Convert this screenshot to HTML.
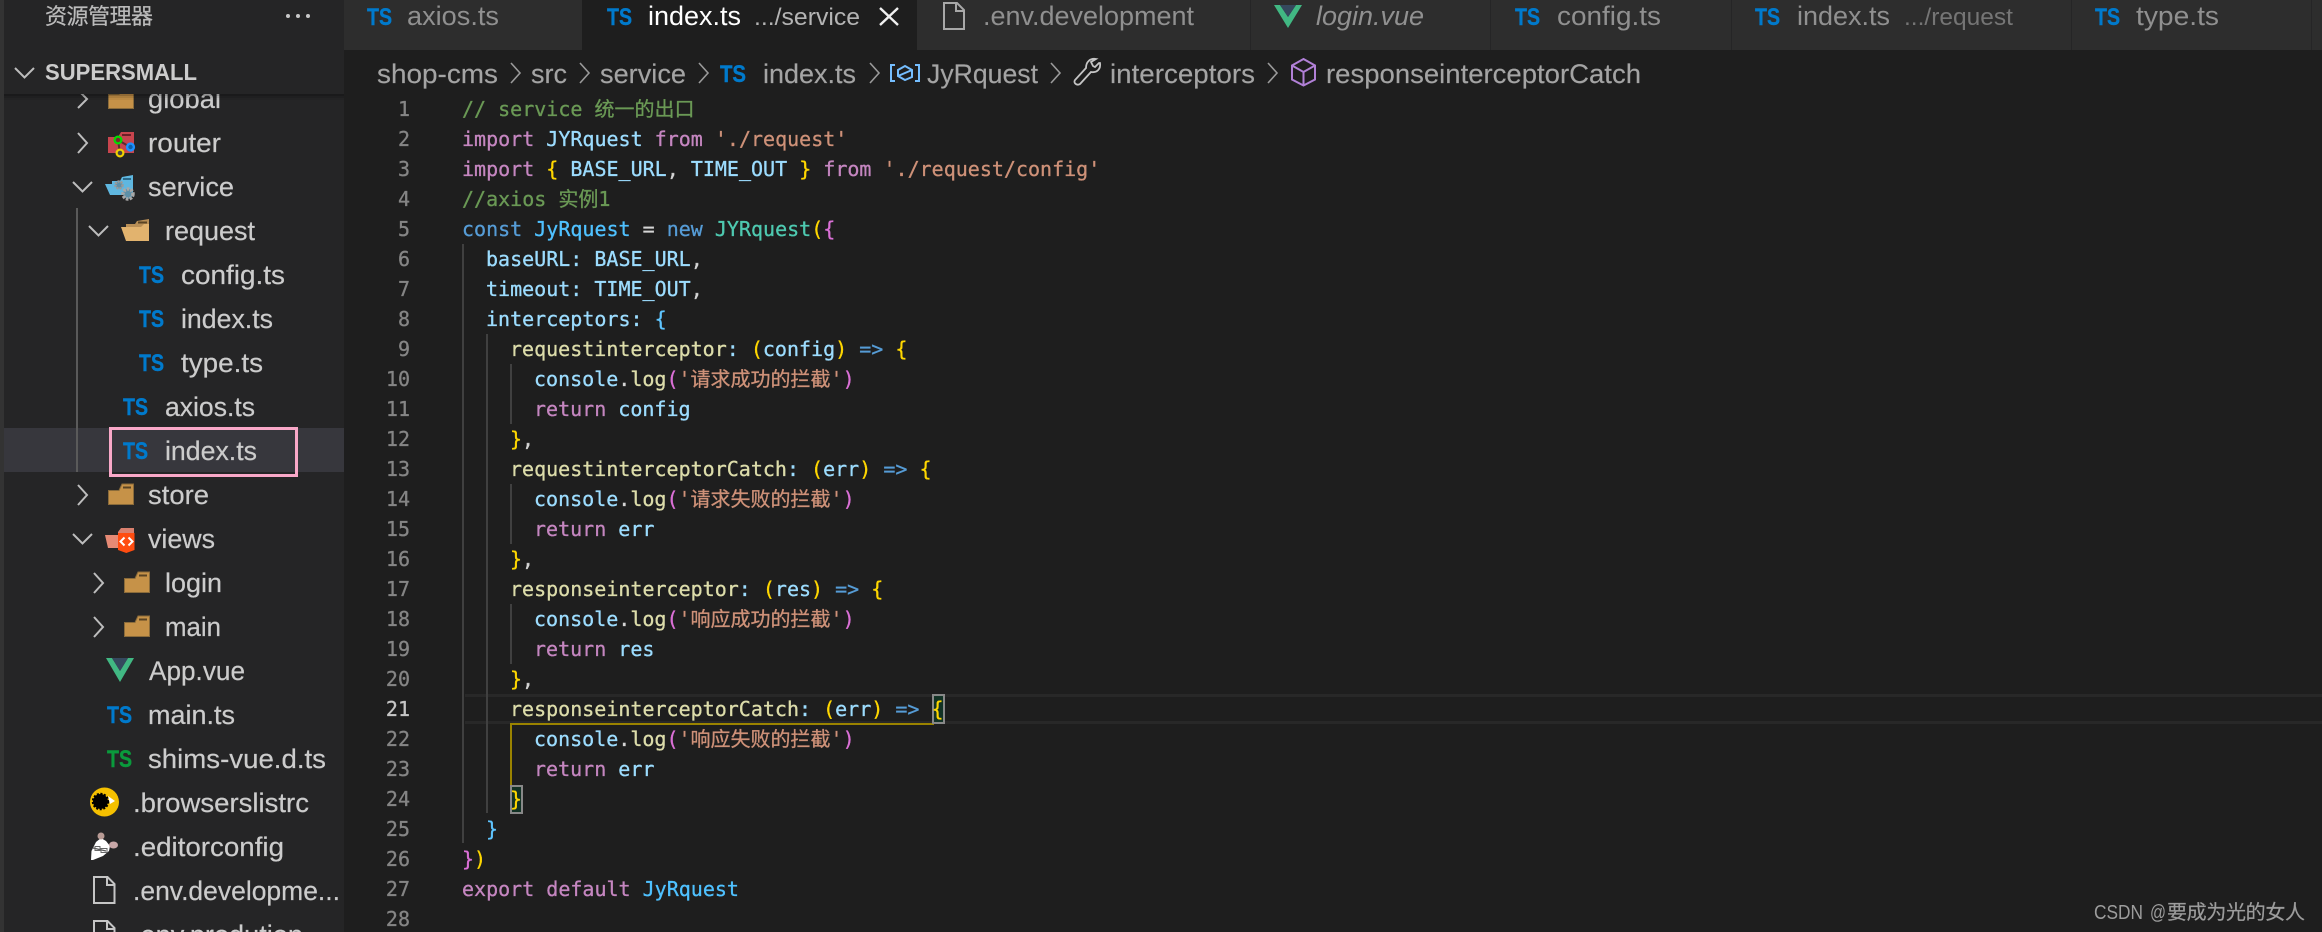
<!DOCTYPE html>
<html><head><meta charset="utf-8"><title>VS Code</title>
<style>
html,body{margin:0;padding:0;background:#1e1e1e;width:2322px;height:932px;overflow:hidden}
svg{display:block}
text{white-space:pre}
.s{font-family:"Liberation Sans","Noto Sans CJK SC",sans-serif;font-size:27px;fill:#cccccc;stroke:#cccccc;stroke-width:.2px}
.tab{font-family:"Liberation Sans",sans-serif;font-size:27px;fill:#909090}
.sm{font-family:"Liberation Sans",sans-serif;font-size:24px;fill:#757575}
.bc{font-family:"Liberation Sans",sans-serif;font-size:27px;fill:#a4a4a4;stroke:#a4a4a4;stroke-width:.15px}
.ts{font-family:"Liberation Sans",sans-serif;font-size:24px;font-weight:bold;fill:#007acc;stroke:#007acc;stroke-width:.4px}
.c{font-family:"DejaVu Sans Mono","Noto Sans CJK SC",monospace;font-size:20px;fill:#d4d4d4;stroke:#d4d4d4;stroke-width:.3px}
.n{font-family:"DejaVu Sans Mono",monospace;font-size:20px;fill:#858585;stroke:#858585;stroke-width:.3px;text-anchor:end}
.kw{fill:#c586c0;stroke:#c586c0}.v{fill:#9cdcfe;stroke:#9cdcfe}.k{fill:#569cd6;stroke:#569cd6}.co{fill:#4fc1ff;stroke:#4fc1ff}.cl{fill:#4ec9b0;stroke:#4ec9b0}.st{fill:#ce9178;stroke:#ce9178}.f{fill:#dcdcaa;stroke:#dcdcaa}.g{fill:#ffd700;stroke:#ffd700}.p{fill:#da70d6;stroke:#da70d6}.cm{fill:#6a9955;stroke:#6a9955}.lb{fill:#5fc5ff;stroke:#5fc5ff}
.ch{fill:none;stroke:#bdbdbd;stroke-width:2}
.chb{fill:none;stroke:#9a9a9a;stroke-width:1.6}
</style></head><body>
<svg xmlns="http://www.w3.org/2000/svg" width="2322" height="932" viewBox="0 0 2322 932">
<defs>
<g id="fold"><path d="M.5 7.5H11L14 1H25.5V21.5H.5Z" fill="#c69248" stroke="#8a6b3a"/><rect x="15" y="3.5" width="8" height="2" fill="#5a4424"/></g>
</defs>
<rect width="2322" height="932" fill="#1e1e1e"/>
<!-- activity strip + sidebar -->
<rect x="4" y="0" width="340" height="932" fill="#252526"/>
<rect x="0" y="0" width="4" height="932" fill="#333333"/>
<rect x="4" y="428" width="340" height="44" fill="#37373d"/>
<rect x="76" y="208" width="2" height="264" fill="#5a5a5a"/>

<!-- tree -->
<path class="ch" d="M78 90l9 9-9 9"/><use href="#fold" x="108" y="87"/>
<text class="s" x="148" y="108" textLength="73" lengthAdjust="spacingAndGlyphs">global</text>

<path class="ch" d="M78 133l9 10-9 10"/>
<path d="M108 137H118L121 132H134V153H108Z" fill="#c8454e"/><rect x="122" y="134" width="9" height="2" fill="#6b2026"/>
<path d="M118 140L130 147M118 140L120 153" stroke="#5c2b30" stroke-width="2" fill="none"/>
<circle cx="118" cy="140" r="3.400" fill="#7a2a30" stroke="#00e000" stroke-width="2.200"/>
<circle cx="130.500" cy="147" r="3.400" fill="#0d5fa8" stroke="#1e90ff" stroke-width="2.400"/>
<circle cx="120" cy="153" r="3.400" fill="#444" stroke="#f0d000" stroke-width="2.200"/>
<text class="s" x="148" y="152" textLength="73" lengthAdjust="spacingAndGlyphs">router</text>

<path class="ch" d="M73 182l9.500 9.500 9.500-9.500"/>
<path d="M112 181H120L122 177L133 175V195H110L105 184H112Z" fill="#5fb7e0"/><rect x="123" y="178" width="8" height="2" fill="#2a6a8a"/>
<circle cx="119" cy="185" r="3.500" fill="#5d90a8" stroke="#9a9a9a" stroke-width="2.500" stroke-dasharray="2 1"/>
<circle cx="128" cy="194" r="5" fill="#5d90a8" stroke="#a8a8a8" stroke-width="3.500" stroke-dasharray="2.500 1.200"/>
<text class="s" x="148" y="196" textLength="86" lengthAdjust="spacingAndGlyphs">service</text>

<path class="ch" d="M89 226l9.500 9.500 9.500-9.500"/>
<path d="M126 227V224H135L137 221L149 219V241H126Z" fill="#b98f56"/><path d="M121 227H141L144 224H149V241H126Z" fill="#e2b36e"/><rect x="138" y="221.500" width="9" height="2" fill="#5a4424"/>
<text class="s" x="165" y="240" textLength="90" lengthAdjust="spacingAndGlyphs">request</text>

<text class="ts" x="139" y="283" textLength="25" lengthAdjust="spacingAndGlyphs">TS</text>
<text class="s" x="181" y="284" textLength="104" lengthAdjust="spacingAndGlyphs">config.ts</text>
<text class="ts" x="139" y="327" textLength="25" lengthAdjust="spacingAndGlyphs">TS</text>
<text class="s" x="181" y="328" textLength="92" lengthAdjust="spacingAndGlyphs">index.ts</text>
<text class="ts" x="139" y="371" textLength="25" lengthAdjust="spacingAndGlyphs">TS</text>
<text class="s" x="181" y="372" textLength="82" lengthAdjust="spacingAndGlyphs">type.ts</text>
<text class="ts" x="123" y="415" textLength="25" lengthAdjust="spacingAndGlyphs">TS</text>
<text class="s" x="165" y="416" textLength="90" lengthAdjust="spacingAndGlyphs">axios.ts</text>
<text class="ts" x="123" y="459" textLength="25" lengthAdjust="spacingAndGlyphs">TS</text>
<text class="s" x="165" y="460" textLength="92" lengthAdjust="spacingAndGlyphs">index.ts</text>
<rect x="110.500" y="428.500" width="186" height="47" fill="none" stroke="#f9a8c8" stroke-width="3"/>

<path class="ch" d="M78 485l9 10-9 10"/><use href="#fold" x="108" y="483"/>
<text class="s" x="148" y="504" textLength="61" lengthAdjust="spacingAndGlyphs">store</text>

<path class="ch" d="M73 534l9.500 9.500 9.500-9.500"/>
<path d="M105 535H118V548H108Z" fill="#e68a75"/><path d="M118 532L121 528H134V534H118Z" fill="#d9806e"/>
<path d="M118 533H134.500V550L126.300 553L118 550Z" fill="#ff4c10"/>
<path d="M124.500 537.500L120.500 541.500L124.500 545.500M128.500 537.500L132.500 541.500L128.500 545.500" stroke="#fff" stroke-width="2" fill="none"/>
<text class="s" x="148" y="548" textLength="67" lengthAdjust="spacingAndGlyphs">views</text>

<path class="ch" d="M94 573l9 10-9 10"/><use href="#fold" x="124" y="571"/>
<text class="s" x="165" y="592" textLength="57" lengthAdjust="spacingAndGlyphs">login</text>
<path class="ch" d="M94 617l9 10-9 10"/><use href="#fold" x="124" y="615"/>
<text class="s" x="165" y="636" textLength="56" lengthAdjust="spacingAndGlyphs">main</text>

<path d="M106 658H112L120 671L128 658H134L120 682Z" fill="#41b883"/><path d="M112 658H128L120 671Z" fill="#35495e"/>
<text class="s" x="149" y="680" textLength="96" lengthAdjust="spacingAndGlyphs">App.vue</text>
<text class="ts" x="107" y="723" textLength="25" lengthAdjust="spacingAndGlyphs">TS</text>
<text class="s" x="148" y="724" textLength="87" lengthAdjust="spacingAndGlyphs">main.ts</text>
<text class="ts" x="107" y="767" textLength="25" lengthAdjust="spacingAndGlyphs" style="fill:#0a9a3c;stroke:#0a9a3c">TS</text>
<text class="s" x="148" y="768" textLength="178" lengthAdjust="spacingAndGlyphs">shims-vue.d.ts</text>

<circle cx="104.500" cy="802" r="14.500" fill="#f5c000"/>
<circle cx="100.500" cy="801.500" r="7.500" fill="#000" stroke="#000" stroke-width="2.500" stroke-dasharray="2 1.500"/>
<path d="M108 796L115 801L110 804Z" fill="#fff"/>
<text class="s" x="133" y="812" textLength="176" lengthAdjust="spacingAndGlyphs">.browserslistrc</text>

<path d="M91 860L91.500 851L96 842L101 838L106 841L110 846L109 851L103 856L93 860Z" fill="#fff"/>
<ellipse cx="101" cy="836" rx="3.500" ry="3.500" fill="#b89a94"/><ellipse cx="113.500" cy="845" rx="4.500" ry="3.500" fill="#c9a8a8"/>
<path d="M93 848L106 851" stroke="#555" stroke-width="1.200" fill="none"/><rect x="95" y="846.500" width="5" height="4" fill="none" stroke="#666"/><rect x="101" y="848.500" width="6" height="4" fill="none" stroke="#666"/>
<text class="s" x="133" y="856" textLength="151" lengthAdjust="spacingAndGlyphs">.editorconfig</text>

<path d="M94 877H107.500L114.500 884V903H94Z M107 877V885H114.500" fill="none" stroke="#c5c5c5" stroke-width="2"/>
<text class="s" x="133" y="900" textLength="207" lengthAdjust="spacingAndGlyphs">.env.developme...</text>
<path d="M94 921H107.500L114.500 928V947H94Z M107 921V929H114.500" fill="none" stroke="#c5c5c5" stroke-width="2"/>
<text class="s" x="133" y="944" textLength="170" lengthAdjust="spacingAndGlyphs">.env.prodution</text>

<!-- sidebar header -->
<rect x="4" y="0" width="340" height="94" fill="#252526"/>
<rect x="4" y="94" width="340" height="2" fill="#000" fill-opacity=".28"/><rect x="4" y="96" width="340" height="2" fill="#000" fill-opacity=".14"/><rect x="4" y="98" width="340" height="2" fill="#000" fill-opacity=".05"/>
<text x="45" y="24" style="font-family:'Liberation Sans','Noto Sans CJK SC',sans-serif;font-size:22px;fill:#bbbbbb;stroke:#bbbbbb;stroke-width:.2px" textLength="108">资源管理器</text>
<circle cx="288" cy="16" r="2" fill="#c8c8c8"/><circle cx="298" cy="16" r="2" fill="#c8c8c8"/><circle cx="308" cy="16" r="2" fill="#c8c8c8"/>
<path class="ch" d="M15 68l9.500 9.500 9.500-9.500"/>
<text x="45" y="80" style="font-family:'Liberation Sans',sans-serif;font-size:23px;font-weight:bold;fill:#cccccc" textLength="152" lengthAdjust="spacingAndGlyphs">SUPERSMALL</text>

<!-- tabs -->
<rect x="344" y="0" width="1978" height="50" fill="#2d2d2d"/>
<rect x="582" y="0" width="335" height="50" fill="#1e1e1e"/>
<g fill="#252526"><rect x="1250" y="0" width="1" height="50"/><rect x="1490" y="0" width="1" height="50"/><rect x="1731" y="0" width="1" height="50"/><rect x="2071" y="0" width="1" height="50"/><rect x="2311" y="0" width="1" height="50"/></g>
<text class="ts" x="367" y="25" textLength="25" lengthAdjust="spacingAndGlyphs">TS</text>
<text class="tab" x="407" y="25" textLength="92" lengthAdjust="spacingAndGlyphs">axios.ts</text>
<text class="ts" x="607" y="25" textLength="25" lengthAdjust="spacingAndGlyphs">TS</text>
<text class="tab" x="648" y="25" textLength="93" lengthAdjust="spacingAndGlyphs" style="fill:#ffffff">index.ts</text>
<text class="sm" x="754" y="25" textLength="106" lengthAdjust="spacingAndGlyphs" style="fill:#b4b4b4">.../service</text>
<path d="M880 8L898 25M898 8L880 25" stroke="#f0f0f0" stroke-width="2.400" fill="none"/>
<path d="M944 3H957L964 10V29H944Z M956 3V11H964" fill="none" stroke="#a8a8a8" stroke-width="2"/>
<text class="tab" x="983" y="25" textLength="211" lengthAdjust="spacingAndGlyphs">.env.development</text>
<path d="M1274 5H1280L1288 17L1296 5H1302L1288 28Z" fill="#41b883"/><path d="M1280 5H1296L1288 17Z" fill="#35495e"/>
<text class="tab" x="1316" y="25" textLength="108" lengthAdjust="spacingAndGlyphs" style="font-style:italic">login.vue</text>
<text class="ts" x="1515" y="25" textLength="25" lengthAdjust="spacingAndGlyphs">TS</text>
<text class="tab" x="1557" y="25" textLength="104" lengthAdjust="spacingAndGlyphs">config.ts</text>
<text class="ts" x="1755" y="25" textLength="25" lengthAdjust="spacingAndGlyphs">TS</text>
<text class="tab" x="1797" y="25" textLength="93" lengthAdjust="spacingAndGlyphs">index.ts</text>
<text class="sm" x="1904" y="25" textLength="109" lengthAdjust="spacingAndGlyphs">.../request</text>
<text class="ts" x="2095" y="25" textLength="25" lengthAdjust="spacingAndGlyphs">TS</text>
<text class="tab" x="2136" y="25" textLength="83" lengthAdjust="spacingAndGlyphs">type.ts</text>

<!-- breadcrumbs -->
<text class="bc" x="377" y="83" textLength="121" lengthAdjust="spacingAndGlyphs">shop-cms</text>
<path class="chb" d="M511 63l9 10-9 10"/>
<text class="bc" x="531" y="83" textLength="36" lengthAdjust="spacingAndGlyphs">src</text>
<path class="chb" d="M580 63l9 10-9 10"/>
<text class="bc" x="600" y="83" textLength="86" lengthAdjust="spacingAndGlyphs">service</text>
<path class="chb" d="M699 63l9 10-9 10"/>
<text class="ts" x="720" y="82" textLength="26" lengthAdjust="spacingAndGlyphs">TS</text>
<text class="bc" x="763" y="83" textLength="93" lengthAdjust="spacingAndGlyphs">index.ts</text>
<path class="chb" d="M870 63l9 10-9 10"/>
<g fill="none" stroke="#75beff" stroke-width="2"><path d="M895 65H891V81H895M915 65H919V81H915"/><path d="M905 66L912 70V77L905 80L898 76V70Z M898 76L912 70"/></g>
<text class="bc" x="927" y="83" textLength="111" lengthAdjust="spacingAndGlyphs">JyRquest</text>
<path class="chb" d="M1051 63l9 10-9 10"/>
<path d="M1099 63L1095 67L1093 66L1091 62L1096 59C1090 58 1086 62 1086 68L1075 80C1073 83 1077 86 1080 84L1091 72C1097 73 1101 69 1100 63Z" fill="none" stroke="#c5c5c5" stroke-width="1.800"/>
<text class="bc" x="1110" y="83" textLength="145" lengthAdjust="spacingAndGlyphs">interceptors</text>
<path class="chb" d="M1268 63l9 10-9 10"/>
<path d="M1303.500 59L1315 65.500V79.500L1303.500 85.500L1292 79.500V65.500Z M1292 65.500L1303.500 72L1315 65.500 M1303.500 72V85.500" fill="none" stroke="#b180d7" stroke-width="2"/>
<text class="bc" x="1326" y="83" textLength="315" lengthAdjust="spacingAndGlyphs">responseinterceptorCatch</text>

<!-- guides and highlights -->
<rect x="465" y="694" width="1857" height="3" fill="#282828"/><rect x="465" y="721" width="1857" height="3" fill="#282828"/>
<g fill="#404040"><rect x="462" y="244" width="2" height="599"/><rect x="486" y="334" width="2" height="479"/><rect x="510" y="364" width="2" height="60"/><rect x="510" y="484" width="2" height="60"/><rect x="510" y="604" width="2" height="60"/></g>
<path d="M934 724H511V785" fill="none" stroke="#9a8300" stroke-width="2"/>
<rect x="933" y="695" width="11" height="28" fill="#0d3a28" fill-opacity=".7" stroke="#888" stroke-width="2"/>
<rect x="511" y="786" width="11" height="27" fill="#0d3a28" fill-opacity=".7" stroke="#888" stroke-width="2"/>

<!-- line numbers -->
<text class="n" x="410" y="116">1</text><text class="n" x="410" y="146">2</text><text class="n" x="410" y="176">3</text><text class="n" x="410" y="206">4</text><text class="n" x="410" y="236">5</text><text class="n" x="410" y="266">6</text><text class="n" x="410" y="296">7</text><text class="n" x="410" y="326">8</text><text class="n" x="410" y="356">9</text><text class="n" x="410" y="386">10</text><text class="n" x="410" y="416">11</text><text class="n" x="410" y="446">12</text><text class="n" x="410" y="476">13</text><text class="n" x="410" y="506">14</text><text class="n" x="410" y="536">15</text><text class="n" x="410" y="566">16</text><text class="n" x="410" y="596">17</text><text class="n" x="410" y="626">18</text><text class="n" x="410" y="656">19</text><text class="n" x="410" y="686">20</text><text class="n" x="410" y="716" style="fill:#c6c6c6;stroke:#c6c6c6">21</text><text class="n" x="410" y="746">22</text><text class="n" x="410" y="776">23</text><text class="n" x="410" y="806">24</text><text class="n" x="410" y="836">25</text><text class="n" x="410" y="866">26</text><text class="n" x="410" y="896">27</text><text class="n" x="410" y="926">28</text>

<!-- code -->
<text class="c" x="462" y="116"><tspan class="cm">// service 统一的出口</tspan></text>
<text class="c" x="462" y="146"><tspan class="kw">import</tspan> <tspan class="v">JYRquest</tspan> <tspan class="kw">from</tspan> <tspan class="st">'./request'</tspan></text>
<text class="c" x="462" y="176"><tspan class="kw">import</tspan> <tspan class="g">{</tspan> <tspan class="v">BASE_URL</tspan>, <tspan class="v">TIME_OUT</tspan> <tspan class="g">}</tspan> <tspan class="kw">from</tspan> <tspan class="st">'./request/config'</tspan></text>
<text class="c" x="462" y="206"><tspan class="cm">//axios 实例1</tspan></text>
<text class="c" x="462" y="236"><tspan class="k">const</tspan> <tspan class="co">JyRquest</tspan> = <tspan class="k">new</tspan> <tspan class="cl">JYRquest</tspan><tspan class="g">(</tspan><tspan class="p">{</tspan></text>
<text class="c" x="486" y="266"><tspan class="v">baseURL:</tspan> <tspan class="v">BASE_URL</tspan>,</text>
<text class="c" x="486" y="296"><tspan class="v">timeout:</tspan> <tspan class="v">TIME_OUT</tspan>,</text>
<text class="c" x="486" y="326"><tspan class="v">interceptors:</tspan> <tspan class="lb">{</tspan></text>
<text class="c" x="510" y="356"><tspan class="f">requestinterceptor</tspan><tspan class="v">:</tspan> <tspan class="g">(</tspan><tspan class="v">config</tspan><tspan class="g">)</tspan> <tspan class="k">=&gt;</tspan> <tspan class="g">{</tspan></text>
<text class="c" x="534" y="386"><tspan class="v">console</tspan>.<tspan class="f">log</tspan><tspan class="p">(</tspan><tspan class="st">'请求成功的拦截'</tspan><tspan class="p">)</tspan></text>
<text class="c" x="534" y="416"><tspan class="kw">return</tspan> <tspan class="v">config</tspan></text>
<text class="c" x="510" y="446"><tspan class="g">}</tspan>,</text>
<text class="c" x="510" y="476"><tspan class="f">requestinterceptorCatch</tspan><tspan class="v">:</tspan> <tspan class="g">(</tspan><tspan class="v">err</tspan><tspan class="g">)</tspan> <tspan class="k">=&gt;</tspan> <tspan class="g">{</tspan></text>
<text class="c" x="534" y="506"><tspan class="v">console</tspan>.<tspan class="f">log</tspan><tspan class="p">(</tspan><tspan class="st">'请求失败的拦截'</tspan><tspan class="p">)</tspan></text>
<text class="c" x="534" y="536"><tspan class="kw">return</tspan> <tspan class="v">err</tspan></text>
<text class="c" x="510" y="566"><tspan class="g">}</tspan>,</text>
<text class="c" x="510" y="596"><tspan class="f">responseinterceptor</tspan><tspan class="v">:</tspan> <tspan class="g">(</tspan><tspan class="v">res</tspan><tspan class="g">)</tspan> <tspan class="k">=&gt;</tspan> <tspan class="g">{</tspan></text>
<text class="c" x="534" y="626"><tspan class="v">console</tspan>.<tspan class="f">log</tspan><tspan class="p">(</tspan><tspan class="st">'响应成功的拦截'</tspan><tspan class="p">)</tspan></text>
<text class="c" x="534" y="656"><tspan class="kw">return</tspan> <tspan class="v">res</tspan></text>
<text class="c" x="510" y="686"><tspan class="g">}</tspan>,</text>
<text class="c" x="510" y="716"><tspan class="f">responseinterceptorCatch</tspan><tspan class="v">:</tspan> <tspan class="g">(</tspan><tspan class="v">err</tspan><tspan class="g">)</tspan> <tspan class="k">=&gt;</tspan> <tspan class="g">{</tspan></text>
<text class="c" x="534" y="746"><tspan class="v">console</tspan>.<tspan class="f">log</tspan><tspan class="p">(</tspan><tspan class="st">'响应失败的拦截'</tspan><tspan class="p">)</tspan></text>
<text class="c" x="534" y="776"><tspan class="kw">return</tspan> <tspan class="v">err</tspan></text>
<text class="c" x="510" y="806"><tspan class="g">}</tspan></text>
<text class="c" x="486" y="836"><tspan class="lb">}</tspan></text>
<text class="c" x="462" y="866"><tspan class="p">}</tspan><tspan class="g">)</tspan></text>
<text class="c" x="462" y="896"><tspan class="kw">export</tspan> <tspan class="kw">default</tspan> <tspan class="co">JyRquest</tspan></text>

<!-- watermark -->
<g style="font-family:'Liberation Sans','Noto Sans CJK SC',sans-serif;font-size:20px;fill:#9c9c9c">
<text x="2094" y="919" textLength="49" lengthAdjust="spacingAndGlyphs">CSDN</text>
<text x="2150" y="919" textLength="16" lengthAdjust="spacingAndGlyphs">@</text>
<text x="2167" y="919" textLength="138" style="stroke:#9c9c9c;stroke-width:.2px">要成为光的女人</text>
</g>
</svg>
</body></html>
